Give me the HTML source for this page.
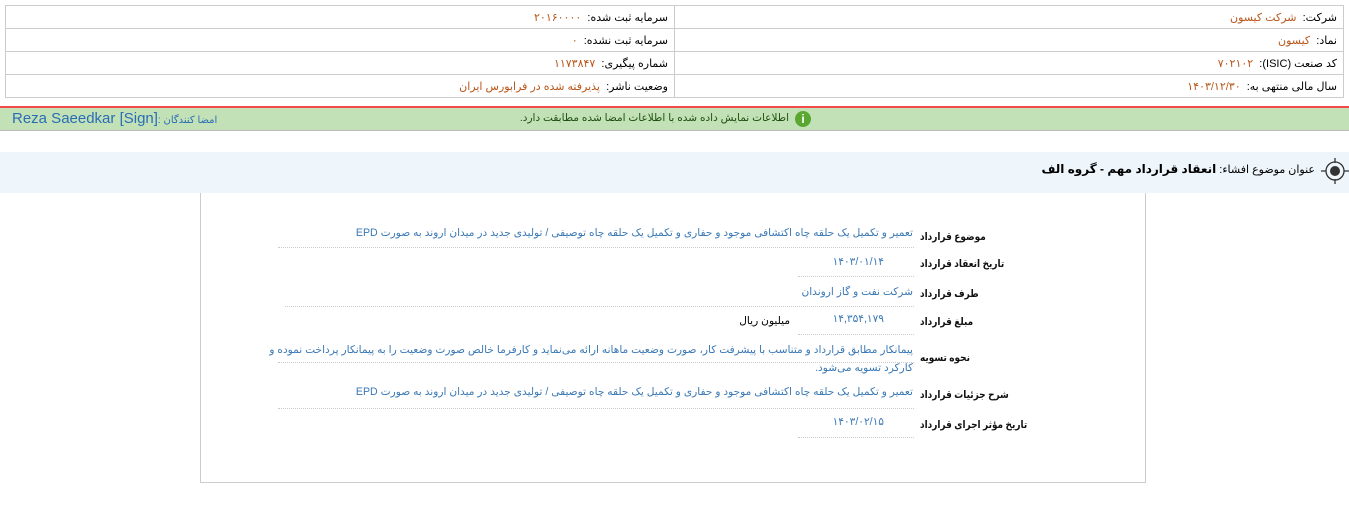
<!DOCTYPE html>
<html><head><meta charset="utf-8"><style>
body{margin:0;width:1349px;height:531px;background:#fff;font-family:"Liberation Sans","DejaVu Sans",sans-serif;font-size:11px;position:relative;overflow:hidden}
.a{position:absolute;white-space:nowrap;direction:rtl}
.o{color:#b8561a}
.b{color:#3a78b5;font-size:10.6px}
.l{font-weight:bold;color:#111;font-size:10.5px;transform:scaleX(.85);transform-origin:left}
.d{position:absolute;border-bottom:1px dotted #ccc}
table{position:absolute;left:5px;top:5px;width:1339px;border-collapse:collapse;direction:rtl}
td{border:1px solid #ccc;height:22px;padding:0 6px;text-align:right;font-size:11px}
</style></head><body>
<table>
<tr><td style="width:656px">شرکت:&nbsp; <span class="o">شرکت کیسون</span></td><td>سرمایه ثبت شده:&nbsp; <span class="o">۲۰۱۶۰۰۰۰</span></td></tr>
<tr><td>نماد:&nbsp; <span class="o">کیسون</span></td><td>سرمایه ثبت نشده:&nbsp; <span class="o">۰</span></td></tr>
<tr><td>کد صنعت (ISIC):&nbsp; <span class="o">۷۰۲۱۰۲</span></td><td>شماره پیگیری:&nbsp; <span class="o">۱۱۷۳۸۴۷</span></td></tr>
<tr><td>سال مالی منتهی به:&nbsp; <span class="o">۱۴۰۳/۱۲/۳۰</span></td><td>وضعیت ناشر:&nbsp; <span class="o">پذیرفته شده در فرابورس ایران</span></td></tr>
</table>
<div style="position:absolute;left:0;top:106px;width:1349px;height:2px;background:#f04a4a"></div>
<div style="position:absolute;left:0;top:108px;width:1349px;height:22px;background:#c2e1b6;border-bottom:1px solid #bbb"></div>
<div style="position:absolute;left:795px;top:111px;width:16px;height:16px;border-radius:50%;background:#5aa832;color:#fff;font-weight:bold;font-size:12px;text-align:center;line-height:16px">i</div>
<div class="a" style="right:560px;top:112px;color:#1e5010;font-size:10.5px">اطلاعات نمایش داده شده با اطلاعات امضا شده مطابقت دارد.</div>
<div class="a" style="left:12px;top:110px;color:#2a6db5;font-size:15px;direction:ltr">Reza Saeedkar [Sign]<span style="font-size:10px">: امضا کنندگان</span></div>
<div style="position:absolute;left:0;top:152px;width:1349px;height:41px;background:#eef5fb"></div>
<svg style="position:absolute;left:1320px;top:155px" width="30" height="32"><circle cx="15" cy="16" r="9" fill="none" stroke="#333" stroke-width="1.3"/><circle cx="15" cy="16" r="5" fill="#333"/><path d="M15 3v5M15 24v5M1 16h5M24 16h5" stroke="#333" stroke-width="1.3"/></svg>
<div class="a" style="right:34px;top:162px;font-size:11px">عنوان موضوع افشاء: <b style="font-size:12px">انعقاد قرارداد مهم - گروه الف</b></div>
<div style="position:absolute;left:200px;top:193px;width:944px;height:289px;border:1px solid #ccc;border-top:none"></div>

<div class="a l" style="left:920px;top:231px">موضوع قرارداد</div>
<div class="a b" style="right:436px;top:227px">تعمیر و تکمیل یک حلقه چاه اکتشافی موجود و حفاری و تکمیل یک حلقه چاه توصیفی / تولیدی جدید در میدان اروند به صورت EPD</div>
<div class="d" style="left:278px;width:636px;top:247px"></div>
<div class="a l" style="left:920px;top:258px">تاریخ انعقاد قرارداد</div>
<div class="a b" style="right:465px;top:256px">۱۴۰۳/۰۱/۱۴</div>
<div class="d" style="left:798px;width:116px;top:276px"></div>
<div class="a l" style="left:920px;top:288px">طرف قرارداد</div>
<div class="a b" style="right:436px;top:286px">شرکت نفت و گاز اروندان</div>
<div class="d" style="left:285px;width:629px;top:306px"></div>
<div class="a l" style="left:920px;top:316px">مبلغ قرارداد</div>
<div class="a b" style="right:465px;top:313px">۱۴,۳۵۴,۱۷۹</div>
<div class="a" style="right:559px;top:315px;font-size:10.6px">میلیون ریال</div>
<div class="d" style="left:798px;width:116px;top:334px"></div>
<div class="a l" style="left:920px;top:352px">نحوه تسویه</div>
<div class="a b" style="right:436px;top:344px">پیمانکار مطابق قرارداد و متناسب با پیشرفت کار، صورت وضعیت ماهانه ارائه می‌نماید و کارفرما خالص صورت وضعیت را به پیمانکار پرداخت نموده و</div>
<div class="a b" style="right:436px;top:362px">کارکرد تسویه می‌شود.</div>
<div class="d" style="left:278px;width:636px;top:362px"></div>
<div class="a l" style="left:920px;top:389px">شرح جزئیات قرارداد</div>
<div class="a b" style="right:436px;top:386px">تعمیر و تکمیل یک حلقه چاه اکتشافی موجود و حفاری و تکمیل یک حلقه چاه توصیفی / تولیدی جدید در میدان اروند به صورت EPD</div>
<div class="d" style="left:278px;width:636px;top:408px"></div>
<div class="a l" style="left:920px;top:419px">تاریخ مؤثر اجرای قرارداد</div>
<div class="a b" style="right:465px;top:416px">۱۴۰۳/۰۲/۱۵</div>
<div class="d" style="left:798px;width:116px;top:437px"></div>
</body></html>
